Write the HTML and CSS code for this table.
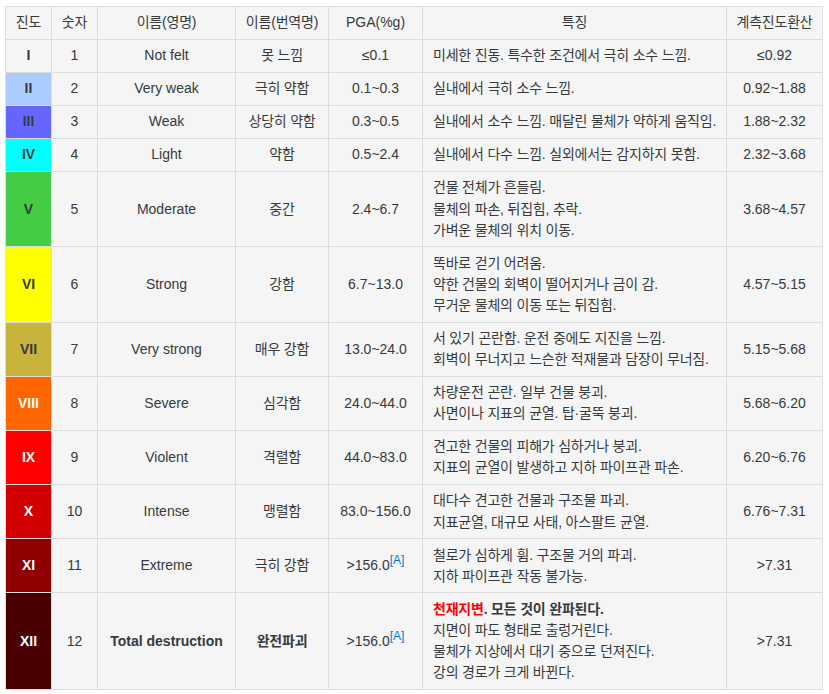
FILE: index.html
```html
<!DOCTYPE html>
<html lang="ko">
<head>
<meta charset="utf-8">
<title>진도</title>
<link rel="stylesheet" href="styles.css">
</head>
<body>
<table class="scale">
  <colgroup>
    <col class="c-lvl"><col class="c-num"><col class="c-en"><col class="c-ko"><col class="c-pga"><col class="c-desc"><col class="c-jma">
  </colgroup>
  <thead>
    <tr>
      <th class="ko">진도</th>
      <th class="ko">숫자</th>
      <th class="ko">이름(영명)</th>
      <th class="ko">이름(번역명)</th>
      <th>PGA(%g)</th>
      <th class="ko">특징</th>
      <th class="ko">계측진도환산</th>
    </tr>
  </thead>
  <tbody>
    <tr>
      <td class="lvl">I</td><td>1</td><td>Not felt</td><td class="ko">못 느낌</td><td>≤0.1</td>
      <td class="desc ko">미세한 진동. 특수한 조건에서 극히 소수 느낌.</td><td>≤0.92</td>
    </tr>
    <tr>
      <td class="lvl lvl-2">II</td><td>2</td><td>Very weak</td><td class="ko">극히 약함</td><td>0.1~0.3</td>
      <td class="desc ko">실내에서 극히 소수 느낌.</td><td>0.92~1.88</td>
    </tr>
    <tr>
      <td class="lvl lvl-3">III</td><td>3</td><td>Weak</td><td class="ko">상당히 약함</td><td>0.3~0.5</td>
      <td class="desc ko">실내에서 소수 느낌. 매달린 물체가 약하게 움직임.</td><td>1.88~2.32</td>
    </tr>
    <tr>
      <td class="lvl lvl-4">IV</td><td>4</td><td>Light</td><td class="ko">약함</td><td>0.5~2.4</td>
      <td class="desc ko">실내에서 다수 느낌. 실외에서는 감지하지 못함.</td><td>2.32~3.68</td>
    </tr>
    <tr>
      <td class="lvl lvl-5">V</td><td>5</td><td>Moderate</td><td class="ko">중간</td><td>2.4~6.7</td>
      <td class="desc ko">건물 전체가 흔들림.<br>물체의 파손, 뒤집힘, 추락.<br>가벼운 물체의 위치 이동.</td><td>3.68~4.57</td>
    </tr>
    <tr>
      <td class="lvl lvl-6">VI</td><td>6</td><td>Strong</td><td class="ko">강함</td><td>6.7~13.0</td>
      <td class="desc ko">똑바로 걷기 어려움.<br>약한 건물의 회벽이 떨어지거나 금이 감.<br>무거운 물체의 이동 또는 뒤집힘.</td><td>4.57~5.15</td>
    </tr>
    <tr>
      <td class="lvl lvl-7">VII</td><td>7</td><td>Very strong</td><td class="ko">매우 강함</td><td>13.0~24.0</td>
      <td class="desc ko">서 있기 곤란함. 운전 중에도 지진을 느낌.<br>회벽이 무너지고 느슨한 적재물과 담장이 무너짐.</td><td>5.15~5.68</td>
    </tr>
    <tr>
      <td class="lvl lvl-8">VIII</td><td>8</td><td>Severe</td><td class="ko">심각함</td><td>24.0~44.0</td>
      <td class="desc ko">차량운전 곤란. 일부 건물 붕괴.<br>사면이나 지표의 균열. 탑·굴뚝 붕괴.</td><td>5.68~6.20</td>
    </tr>
    <tr>
      <td class="lvl lvl-9">IX</td><td>9</td><td>Violent</td><td class="ko">격렬함</td><td>44.0~83.0</td>
      <td class="desc ko">견고한 건물의 피해가 심하거나 붕괴.<br>지표의 균열이 발생하고 지하 파이프관 파손.</td><td>6.20~6.76</td>
    </tr>
    <tr>
      <td class="lvl lvl-10">X</td><td>10</td><td>Intense</td><td class="ko">맹렬함</td><td>83.0~156.0</td>
      <td class="desc ko">대다수 견고한 건물과 구조물 파괴.<br>지표균열, 대규모 사태, 아스팔트 균열.</td><td>6.76~7.31</td>
    </tr>
    <tr>
      <td class="lvl lvl-11">XI</td><td>11</td><td>Extreme</td><td class="ko">극히 강함</td><td>&gt;156.0<sup class="fn">[A]</sup></td>
      <td class="desc ko">철로가 심하게 휨. 구조물 거의 파괴.<br>지하 파이프관 작동 불가능.</td><td>&gt;7.31</td>
    </tr>
    <tr>
      <td class="lvl lvl-12">XII</td><td>12</td><td><b>Total destruction</b></td><td class="ko"><b>완전파괴</b></td><td>&gt;156.0<sup class="fn">[A]</sup></td>
      <td class="desc ko"><b><span class="red">천재지변</span>. 모든 것이 완파된다.</b><br>지면이 파도 형태로 출렁거린다.<br>물체가 지상에서 대기 중으로 던져진다.<br>강의 경로가 크게 바뀐다.</td><td>&gt;7.31</td>
    </tr>
  </tbody>
</table>
</body>
</html>
```
FILE: styles.css
```css
html, body {
  background: #ffffff;
}
body {
  margin: 6px 5px;
  font-family: "Liberation Sans", "Noto Sans CJK KR", sans-serif;
  font-size: 14px;
  color: #373a3c;
}
.scale {
  border-collapse: collapse;
  table-layout: fixed;
  width: 818px;
  background: #f5f5f5;
}
.c-lvl { width: 46px; }
.c-num { width: 46px; }
.c-en { width: 138px; }
.c-ko { width: 93px; }
.c-pga { width: 94px; }
.c-desc { width: 304px; }
.c-jma { width: 96px; }

.scale th,
.scale td {
  border: 1px solid #dddddd;
  padding: 5.42px 6px;
  line-height: 21.17px;
  text-align: center;
  vertical-align: middle;
  font-weight: normal;
  white-space: nowrap;
}
.scale .ko {
  letter-spacing: -0.2px;
}
.scale td.desc {
  text-align: left;
  padding-left: 10px;
  padding-right: 10px;
}
.scale b {
  font-weight: bold;
}
.red {
  color: #ff0000;
}
.fn {
  color: #0275d8;
  font-size: 12px;
  line-height: 0;
  vertical-align: 6px;
}
.scale td.lvl {
  font-weight: bold;
  padding-left: 2px;
  padding-right: 2px;
}
.lvl-2 { background: #aaccff; }
.lvl-3 { background: #6666ff; }
.lvl-4 { background: #00ffff; }
.lvl-5 { background: #44cc44; }
.lvl-6 { background: #ffff00; }
.lvl-7 { background: #c8b43c; }
.lvl-8 { background: #ff6600; color: #ffffff; }
.lvl-9 { background: #ff0000; color: #ffffff; }
.lvl-10 { background: #d20000; color: #ffffff; }
.lvl-11 { background: #900000; color: #ffffff; }
.lvl-12 { background: #480000; color: #ffffff; }
```
